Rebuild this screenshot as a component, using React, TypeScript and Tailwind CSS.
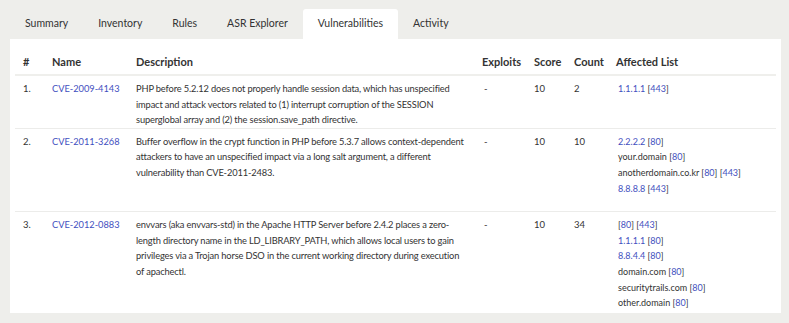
import React from 'react';

type Host = { host?: string; link?: boolean; ports: string[] };

type Vuln = {
  id: string;
  description: string[];
  exploits: string;
  score: number;
  count: number;
  affected: Host[];
};

const tabs = ['Summary', 'Inventory', 'Rules', 'ASR Explorer', 'Vulnerabilities', 'Activity'];

// descriptions kept line by line so they wrap like the original table
const vulns: Vuln[] = [
  {
    id: 'CVE-2009-4143',
    description: [
      'PHP before 5.2.12 does not properly handle session data, which has unspecified',
      'impact and attack vectors related to (1) interrupt corruption of the SESSION',
      'superglobal array and (2) the session.save_path directive.',
    ],
    exploits: '-',
    score: 10,
    count: 2,
    affected: [{ host: '1.1.1.1', link: true, ports: ['443'] }],
  },
  {
    id: 'CVE-2011-3268',
    description: [
      'Buffer overflow in the crypt function in PHP before 5.3.7 allows context-dependent',
      'attackers to have an unspecified impact via a long salt argument, a different',
      'vulnerability than CVE-2011-2483.',
    ],
    exploits: '-',
    score: 10,
    count: 10,
    affected: [
      { host: '2.2.2.2', link: true, ports: ['80'] },
      { host: 'your.domain', ports: ['80'] },
      { host: 'anotherdomain.co.kr', ports: ['80', '443'] },
      { host: '8.8.8.8', link: true, ports: ['443'] },
    ],
  },
  {
    id: 'CVE-2012-0883',
    description: [
      'envvars (aka envvars-std) in the Apache HTTP Server before 2.4.2 places a zero-',
      'length directory name in the LD_LIBRARY_PATH, which allows local users to gain',
      'privileges via a Trojan horse DSO in the current working directory during execution',
      'of apachectl.',
    ],
    exploits: '-',
    score: 10,
    count: 34,
    affected: [
      { ports: ['80', '443'] },
      { host: '1.1.1.1', link: true, ports: ['80'] },
      { host: '8.8.4.4', link: true, ports: ['80'] },
      { host: 'domain.com', ports: ['80'] },
      { host: 'securitytrails.com', ports: ['80'] },
      { host: 'other.domain', ports: ['80'] },
    ],
  },
];

const cols = 'grid grid-cols-[29px_84px_346px_52px_40px_42px_1fr]';

const HostLine: React.FC<{ h: Host }> = ({ h }) => (
  <div className="leading-[15.6px] whitespace-nowrap">
    {h.host && (
      <span className={h.link ? 'text-[#3f4fc0]' : 'text-[#333]'}>{h.host} </span>
    )}
    {h.ports.map((p, i) => (
      <span key={p}>
        {i > 0 && ' '}
        <span className="text-[#333]">[</span>
        <span className="text-[#3f4fc0]">{p}</span>
        <span className="text-[#333]">]</span>
      </span>
    ))}
  </div>
);

export default function App() {
  return (
    <div
      className="w-[789px] h-[323px] bg-[#eeeeeb] overflow-hidden text-[#333]"
      style={{ fontFamily: 'Lato, "Open Sans", sans-serif' }}
    >
      <div className="flex pt-[9px] pl-[10px] h-[39px]">
        {tabs.map(t => (
          <div
            key={t}
            className={
              'h-[30px] flex items-center pl-[15px] pr-[15px] text-[10.5px] rounded-t-[3px] ' +
              (t === 'Vulnerabilities' ? 'bg-white' : '')
            }
          >
            {t}
          </div>
        ))}
      </div>
      <div className="ml-[10px] w-[771px] h-[274px] bg-white px-[5px] pt-[11px] overflow-hidden">
        <div className={cols + ' border-b-2 border-[#efefec] h-[26px] items-center text-[11px] font-bold'}>
          <div className="pl-[8px]">#</div>
          <div className="pl-[8px]">Name</div>
          <div className="pl-[8px]">Description</div>
          <div className="pl-[8px]">Exploits</div>
          <div className="pl-[8px]">Score</div>
          <div className="pl-[8px]">Count</div>
          <div className="pl-[8px]">Affected List</div>
        </div>
        {vulns.map((v, i) => (
          <div
            key={v.id}
            className={cols + ' text-[9.5px] pt-[5px] border-b border-[#ececea] last:border-b-0'}
          >
            <div className="pl-[8px] leading-[15.6px]">{i + 1}.</div>
            <div className="pl-[8px] leading-[15.6px] text-[9.25px] text-[#3f4fc0]">{v.id}</div>
            <div className="pl-[8px] leading-[15.6px] text-[9.3px] tracking-[-0.15px]">
              {v.description.map(line => (
                <div key={line} className="whitespace-nowrap">{line}</div>
              ))}
            </div>
            <div className="pl-[10px] leading-[15.6px]">{v.exploits}</div>
            <div className="pl-[8px] leading-[15.6px]">{v.score}</div>
            <div className="pl-[8px] leading-[15.6px]">{v.count}</div>
            <div className="pl-[10px] pb-[15px] text-[9px]">
              {v.affected.map((h, k) => (
                <HostLine key={k} h={h} />
              ))}
            </div>
          </div>
        ))}
      </div>
    </div>
  );
}
